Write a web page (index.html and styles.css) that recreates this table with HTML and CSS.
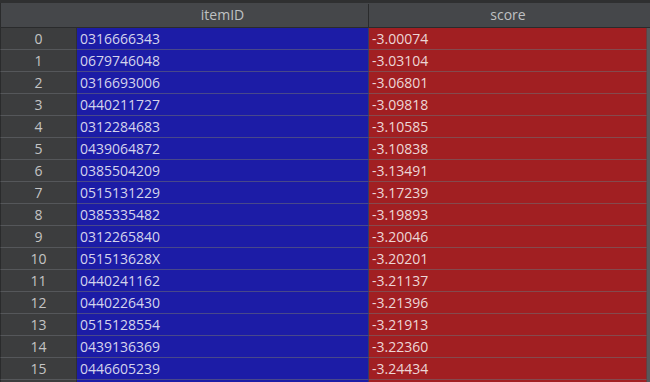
FILE: index.html
```html
<!DOCTYPE html>
<html>
<head>
<meta charset="utf-8">
<link rel="stylesheet" href="styles.css">
</head>
<body>
<div class="view">
  <div class="table">
    <div class="hdr">
      <div class="hcell idx"></div>
      <div class="hcell item">itemID</div>
      <div class="hcell score">score</div>
      <div class="hcell corner"></div>
    </div>
    <div class="body">
      <div class="rows">
        <div class="row"><div class="cell idx">0</div><div class="cell item">0316666343</div><div class="cell score">-3.00074</div></div>
        <div class="row"><div class="cell idx">1</div><div class="cell item">0679746048</div><div class="cell score">-3.03104</div></div>
        <div class="row"><div class="cell idx">2</div><div class="cell item">0316693006</div><div class="cell score">-3.06801</div></div>
        <div class="row"><div class="cell idx">3</div><div class="cell item">0440211727</div><div class="cell score">-3.09818</div></div>
        <div class="row"><div class="cell idx">4</div><div class="cell item">0312284683</div><div class="cell score">-3.10585</div></div>
        <div class="row"><div class="cell idx">5</div><div class="cell item">0439064872</div><div class="cell score">-3.10838</div></div>
        <div class="row"><div class="cell idx">6</div><div class="cell item">0385504209</div><div class="cell score">-3.13491</div></div>
        <div class="row"><div class="cell idx">7</div><div class="cell item">0515131229</div><div class="cell score">-3.17239</div></div>
        <div class="row"><div class="cell idx">8</div><div class="cell item">0385335482</div><div class="cell score">-3.19893</div></div>
        <div class="row"><div class="cell idx">9</div><div class="cell item">0312265840</div><div class="cell score">-3.20046</div></div>
        <div class="row"><div class="cell idx">10</div><div class="cell item">051513628X</div><div class="cell score">-3.20201</div></div>
        <div class="row"><div class="cell idx">11</div><div class="cell item">0440241162</div><div class="cell score">-3.21137</div></div>
        <div class="row"><div class="cell idx">12</div><div class="cell item">0440226430</div><div class="cell score">-3.21396</div></div>
        <div class="row"><div class="cell idx">13</div><div class="cell item">0515128554</div><div class="cell score">-3.21913</div></div>
        <div class="row"><div class="cell idx">14</div><div class="cell item">0439136369</div><div class="cell score">-3.22360</div></div>
        <div class="row"><div class="cell idx">15</div><div class="cell item">0446605239</div><div class="cell score">-3.24434</div></div>
        <div class="row"><div class="cell idx"></div><div class="cell item"></div><div class="cell score"></div></div>
      </div>
      <div class="scrollbar"></div>
    </div>
  </div>
</div>
</body>
</html>
```
FILE: styles.css
```css
html, body {
  margin: 0;
  padding: 0;
  background: #2f3031;
}
.view {
  width: 650px;
  height: 382px;
  overflow: hidden;
  padding-top: 3px;
  box-sizing: border-box;
  font-family: "Open Sans", "DejaVu Sans", sans-serif;
  font-size: 14px;
}
.hdr {
  display: flex;
  height: 24px;
  background: #45474a;
  border-bottom: 1px solid #2a2b2c;
  color: #bfc1c3;
}
.hcell {
  line-height: 24px;
  text-align: center;
  box-sizing: border-box;
}
.hcell.idx { width: 77px; border-left: 1px solid #2a2b2c; }
.hcell.item { width: 292px; border-right: 1px solid #2a2b2c; margin-top: 1px; line-height: 22px; }
.hcell.score { width: 278px; }
.hcell.corner { width: 3px; }
.body {
  display: flex;
}
.rows {
  display: flex;
  flex-direction: column;
}
.row {
  display: flex;
  height: 22px;
}
.cell {
  box-sizing: border-box;
  height: 22px;
  line-height: 21px;
  border-bottom: 1px solid rgba(110, 110, 115, 0.55);
  white-space: nowrap;
}
.cell.idx {
  width: 77px;
  text-align: center;
  background: #3c3d3e;
  color: #c4c4c4;
  border-left: 1px solid #2a2b2c;
  border-right: 1px solid #2f3031;
  border-bottom-color: #55575a;
}
.cell.item {
  width: 292px;
  background: #1c1ca6;
  color: #d4d4ec;
  padding-left: 3px;
  border-right: 1px solid #3a3a62;
}
.cell.score {
  width: 278px;
  background: #a11f22;
  color: #ecd6d6;
  padding-left: 3px;
  border-right: 1px solid #6b3a3c;
}
.scrollbar {
  width: 3px;
  height: 360px;
  background: #55585b;
}
```
